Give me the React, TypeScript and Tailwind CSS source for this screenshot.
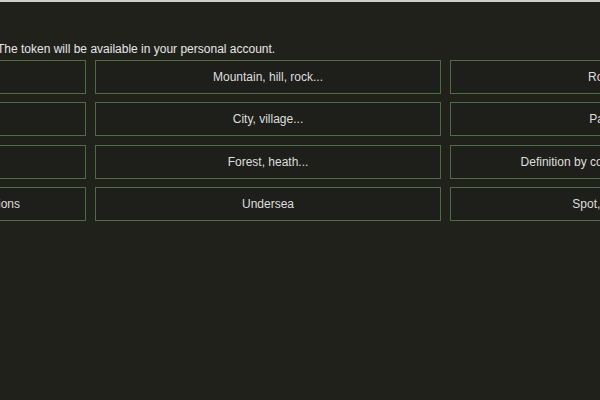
import React from "react";

const items = [
  "Sea, lake, river...",
  "Mountain, hill, rock...",
  "Road, path...",
  "Desert, plain...",
  "City, village...",
  "Park, lawn...",
  "Cave, grotto...",
  "Forest, heath...",
  "Definition by coordinates, GPS, map...",
  "Historical monuments and constructions",
  "Undersea",
  "Spot, natural site...",
];

export default function App() {
  return (
    <div
      className="w-[600px] h-[400px] overflow-hidden bg-[#21211c] border-t-2 border-[#cfcfcf] text-[#e6e6e6]"
      style={{ fontFamily: '"Liberation Sans", Arial, sans-serif' }}
    >
      <p className="mt-[40px] ml-[-3px] text-[12px] leading-[14px] whitespace-nowrap">
        The token will be available in your personal account.
      </p>
      <div className="mt-[4px] ml-[-259px] w-[1054px] grid grid-cols-3 gap-x-[9px] gap-y-[8.4px]">
        {items.map((t) => (
          <div
            key={t}
            className="h-[34px] flex items-center justify-center border border-[#4d6b45] bg-[#1e1e1a] text-[12px] text-[#dedede] whitespace-nowrap"
          >
            {t}
          </div>
        ))}
      </div>
    </div>
  );
}
